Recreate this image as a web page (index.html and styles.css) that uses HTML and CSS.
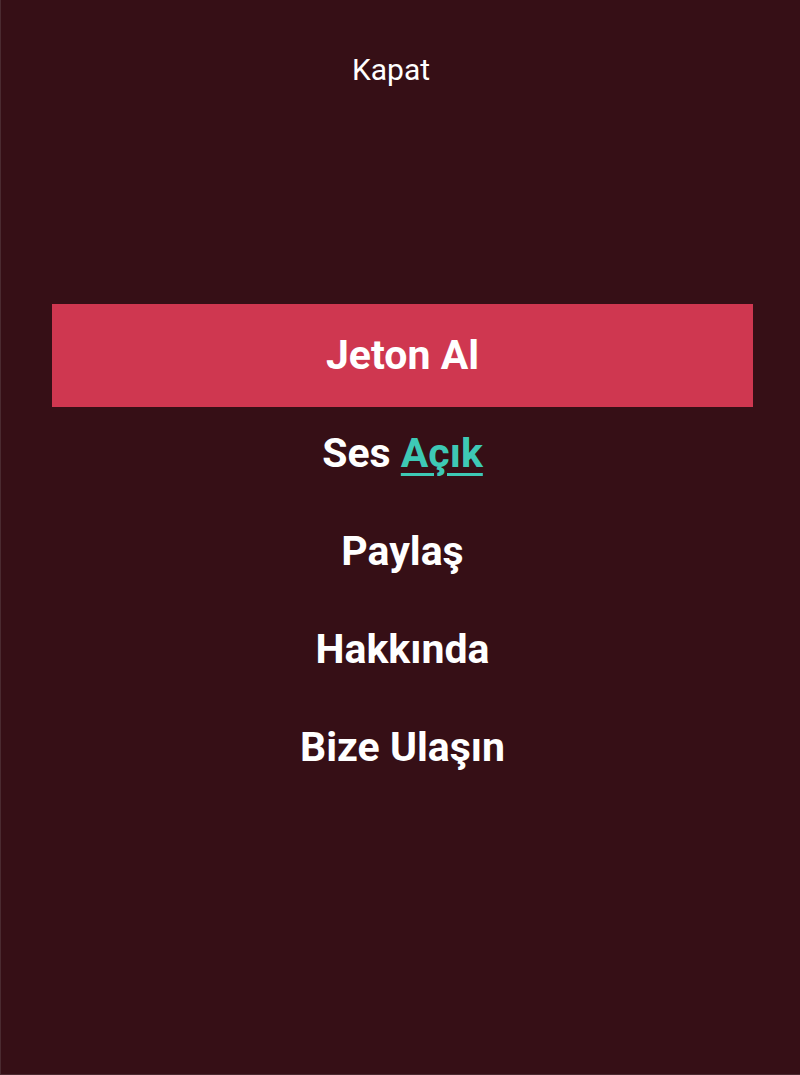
FILE: index.html
```html
<!DOCTYPE html>
<html lang="tr">
<head>
    <meta charset="UTF-8">
    <title>Menü</title>
    <link rel="stylesheet" href="styles.css">
</head>
<body>
<div id="menu">
    <div class="top">
        <a class="close" href="#">Kapat</a>
    </div>
    <ul id="list">
        <li class="active"><a href="#">Jeton Al</a></li>
        <li><a href="#">Ses <span class="on">Açık</span></a></li>
        <li><a href="#">Paylaş</a></li>
        <li><a href="#">Hakkında</a></li>
        <li><a href="#">Bize Ulaşın</a></li>
    </ul>
</div>
</body>
</html>
```

FILE: styles.css
```css
* {
    margin: 0;
    padding: 0;
    list-style: none;
}

html, body {
    height: 100%;
}

body {
    background: #360f16;
    font-family: Roboto, "Liberation Sans", sans-serif;
    color: #fff;
}

a {
    color: #fff;
    text-decoration: none;
}

#menu {
    height: 100%;
    box-sizing: border-box;
    border: 1px solid #4a2a30;
    border-top: 0;
    border-right: 0;
    padding: 0 47px 0 51px;
}

.top {
    height: 304px;
    padding-top: 51px;
    box-sizing: border-box;
    text-align: center;
    padding-right: 23px;
}

.close {
    font-size: 30px;
    line-height: 38px;
}

#list li {
    height: 98px;
    line-height: 98px;
    text-align: center;
    font-size: 41px;
    font-weight: bold;
}

#list .active {
    height: 103px;
    line-height: 103px;
    margin-bottom: -3px;
    background: #cf3750;
}

#list .on {
    color: #3ec9b5;
    text-decoration: underline;
    text-decoration-thickness: 3px;
    text-underline-offset: 6px;
}
```
